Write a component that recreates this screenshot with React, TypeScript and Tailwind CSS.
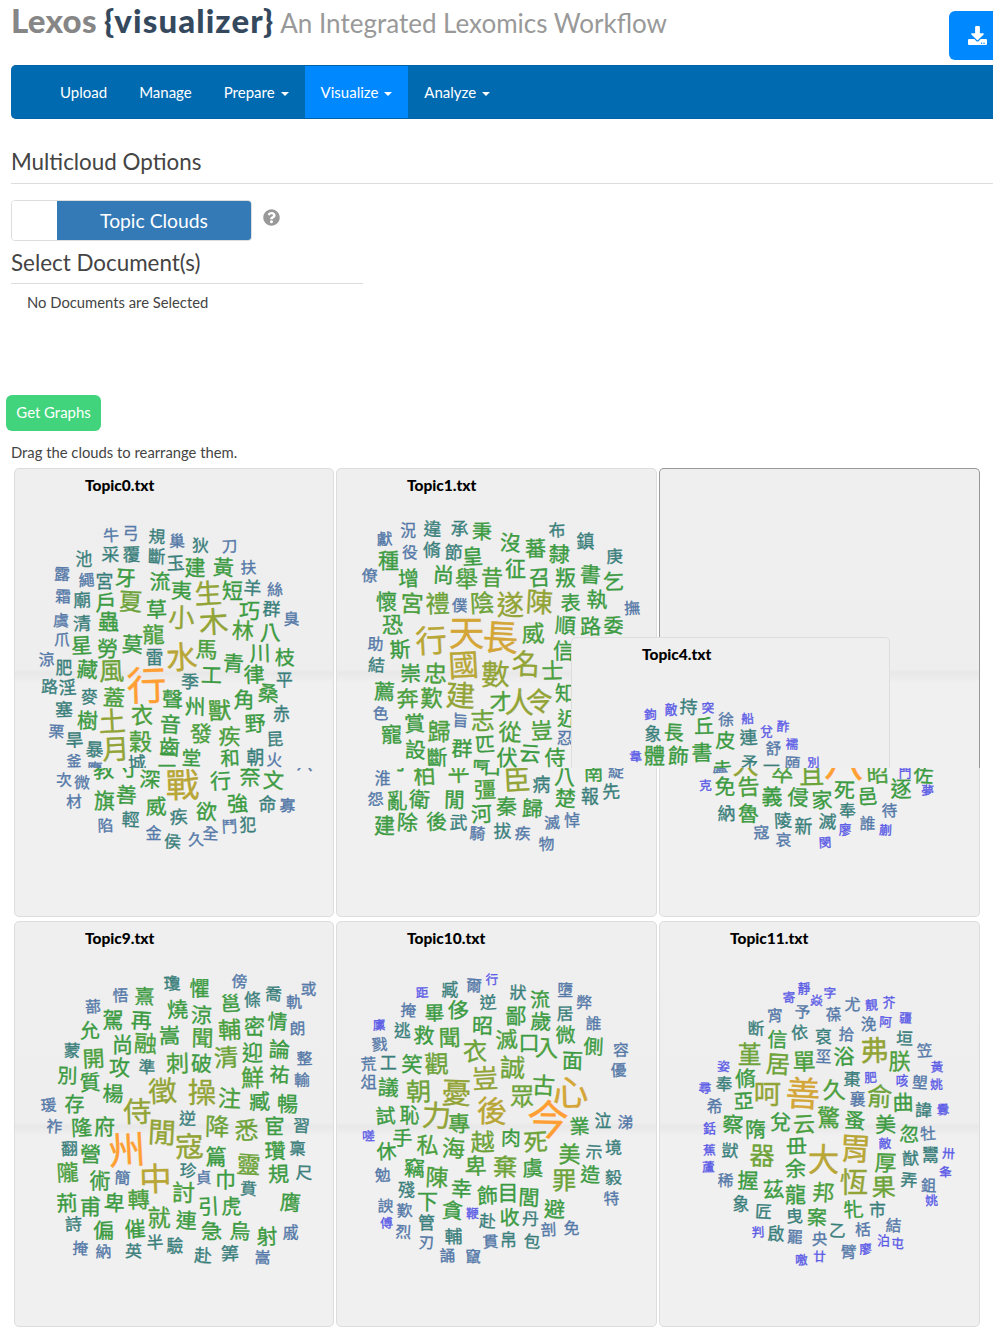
import React from "react";
import { FaDownload, FaQuestionCircle } from "react-icons/fa";

type Word = { text: string; x: number; y: number; size: number; tilt: number };

// Each entry is "glyph x y size"; x and y give the centre of the glyph.
const parse = (source: string): Word[] =>
  source
    .trim()
    .split(/\s*,\s*/)
    .filter(Boolean)
    .map((entry, i) => {
      const [text, x, y, size] = entry.split(" ");
      return { text, x: +x, y: +y, size: +size, tilt: ((i * 7) % 5) * 1.6 - 3.2 };
    });

const topic0Top = parse(`牛 111 535.3 15,弓 130.5 533.5 15,規 157 536.5 16,巢 177 541 15,狄 200.5 545.5 16,刀 229.5 546 15,池 84 559 16,采 110.5 554.5 17,覆 131.5 554.5 17,斷 156.5 556.5 17,玉 175.5 563 17,建 195 567 20,黃 223.5 567.5 20,扶 248.5 567.5 15,露 62 574 15,繩 86.5 580 15,宮 104.5 581 17,牙 125.5 578 20,流 160 581.5 20,夷 181.5 590.5 20,生 208 593.5 26,短 232.5 590 20,羊 252.5 588 17,絲 275 589.5 15,霜 63 596.5 15,廟 82 600 17,戶 106 602.5 20,夏 130.5 601.5 23,草 156.5 609.5 20,小 181.5 617.5 25,木 213.5 622 28,巧 249.5 610.5 20,群 271.5 609 17,臭 291.5 619 15,虞 61 620.5 15,清 82 623.5 17,蟲 108.5 621 20,林 243 630.5 21,八 270 632.5 20,爪 62 639.5 15,星 81.5 645.5 20,勞 107.5 648.5 20,莫 132.5 644.5 20,龍 153.5 634.5 21,馬 206.5 649.5 21,水 181.5 657 30,雷 154.5 657 17,青 233.5 663.5 20,川 260 653 20,枝 285 657.5 19,涼 46.5 659.5 15,肥 64 668 16,藏 87.5 669.5 20,風 111.5 671 24,工 211.5 675 20,律 254 674.5 20,平 284.5 679.5 16,季 190 681.5 17,行 146.5 685.5 38,路 49.5 686.5 16,淫 67.5 687.5 17,麥 89.5 696.5 16,蓋 114 697.5 21,聲 172.5 699.5 20,州 195 706.5 20,獸 219.5 710.5 22,角 244 699.5 20,桑 268.5 693.5 20,塞 64 709.5 17,樹 87.5 720.5 20,土 112 721.5 26,衣 142 715 21,音 170.5 724.5 20,發 201 733.5 21,疾 229.5 736.5 21,野 255 723.5 20,赤 281.5 714 16,栗 56.5 731.5 15,旱 74.5 740 17,暴 94.5 749.5 17,月 115.5 749 26,穀 140.5 741.5 22,齒 169.5 747 20,昆 275 739 16,堂 191.5 758 18.5,和 230 758 18.5,朝 255.5 757.5 17,火 274.5 760 15,釜 74 761 14,鷹 94.5 769 15,城 137 763 17,二 167 760 18`);

const topic0Bottom = parse(`教 103.5 770 20,寸 128.5 767 20,深 150 779.5 20,戰 182.5 785 32,、 208 762 24,行 220.5 781 20,奈 250 776.5 20,文 273.5 780.5 20,次 64 780 15,微 82 782.5 15,材 74 801.5 15,旗 104.5 800.5 20,善 126.5 795 20,威 156 806.5 20,欲 206.5 811.5 20,強 237.5 803.5 20,命 267.5 804 17,寡 287.5 805.5 15,陷 105.5 825.5 15,輕 130.5 819.5 17,疾 178.5 817 17,金 153.5 833.5 15,侯 172.5 841.5 16,久 196 839.5 15,全 210.5 833.5 15,鬥 229.5 826.5 15,犯 248 824.5 16,八 305 764 15`);

const topic1Top = parse(`獻 384.5 539 15,況 408 530.5 15,違 432.5 529 17,承 459.5 528.5 17,秉 482 531.5 19,布 557 530.5 16,鎮 585.5 541.5 17,沒 510.5 543 20,蕃 535.5 548.5 20,隸 559.5 554 20,庚 614.5 556.5 16,種 388.5 560.5 20,役 410 552.5 15,脩 432 550 17,節 453.5 552.5 17,皇 472.5 556.5 20,征 515.5 568.5 20,尚 443.5 575 20,舉 466.5 579 22,昔 492 577.5 21,召 539.5 577.5 20,叛 565.5 577.5 20,書 590.5 574.5 20,乞 613.5 581.5 20,僚 369.5 575.5 15,增 408.5 578.5 20,懷 386.5 601.5 20,宮 412 603.5 22,禮 437.5 603.5 23,僕 459.5 605.5 15,陰 482 603 23,遂 510.5 604.5 26,陳 539.5 602 26,表 570.5 603 19,執 597 599.5 20,撫 632 608 15,恐 392.5 624.5 20,順 565.5 625.5 20,路 590.5 626.5 20,委 613.5 625.5 19,行 431 640.5 30,天 466.5 632.5 34,長 500.5 637.5 34,威 533 633.5 22,助 375.5 644 15,斯 400 649.5 20,信 563.5 650 20,結 376.5 665 16,崇 410.5 673.5 20,忠 435.5 673.5 22,國 463.5 665 29,數 495.5 674.5 27,名 526 664 27,士 552.5 670.5 21,薦 384.5 691.5 20,奔 407.5 698.5 21,歎 431.5 697.5 21,建 460.5 695.5 28,才 500.5 701.5 21,人 519.5 702.5 28,令 539.5 701.5 26,知 565 694 19,近 567.5 718.5 19,志 482.5 720.5 23,色 380.5 713.5 15,賞 414.5 723.5 20,歸 439 731.5 22,旨 460.5 720.5 15,寵 391.5 734.5 20,從 510 732 22,豈 541.5 730.5 21,忍 564.5 738 15,設 415.5 750 20,斷 437 757.5 20,群 462 748.5 20,匹 485 744.5 19,伏 507 757 20,云 530 753.5 20,侍 555 757.5 20,厚 481 768 18`);

const topic1Bottom = parse(`柏 424.5 775.5 21,淮 382.5 778.5 15,可 397 762 20,平 458.5 773 21,石 491 766 20,臣 517 780 26,病 541.5 784 17,八 565 777 20,南 593.5 773 19,綻 616 771.5 15,先 611 791.5 17,報 590 796 17,楚 565.5 798.5 20,彊 485 789.5 21,閒 454.5 799.5 20,怨 375.5 799 15,亂 397 800 20,衛 419.5 799.5 20,秦 506.5 806.5 20,歸 532.5 808.5 20,河 481.5 814 20,建 384.5 825.5 20,除 407.5 822.5 20,後 436.5 821.5 20,武 458.5 822.5 17,滅 552 822.5 15,悼 572 820.5 15,騎 477.5 833.5 15,拔 502.5 831 17,疾 522.5 833.5 15,物 546.5 844 15`);

const topic4Top = parse(`鉤 650.5 714.5 12,敵 671 709 12,持 688.5 707 17,突 708 708 12,徐 726 719.5 15,船 747.5 718.5 12,象 653 733.5 16,長 674 732.5 19,丘 704 726 19,皮 725.5 740.5 19,連 748.5 737.5 17,兌 766.5 731.5 12,酢 783 726.5 12,舒 773.5 748.5 15,襦 792 744 12,韋 635.5 756.5 12,體 654.5 755 20,飾 678.5 756 20,書 702 752.5 20,矛 749.5 762.5 16,走 722.5 769 18,一 771.5 766 16,頤 792.5 763.5 15,別 813.5 762.5 11.5`);

const topic4Bottom = parse(`盧 720 766 15,大 745.5 764 25,卒 782.5 773.5 21,且 811.5 775 24,八 844 762 38,昭 877.5 774 21,門 905 772 12,佐 923.5 775 19,克 705.5 785.5 12,免 725 786.5 20,告 748.5 786.5 21,義 772 796.5 20,侵 798 797.5 20,家 822 800 20,死 844.5 790 20,邑 867.5 796.5 19,逐 901 788.5 20,夢 927.5 790.5 12,納 726.5 813.5 17,魯 748.5 813.5 20,陵 783 820.5 17,新 803.5 826 17,滅 827.5 821.5 17,奉 847.5 810.5 16,誰 867.5 823.5 15,待 889.5 810.5 15,廖 845 829 12,蒯 885.5 830 12,寇 761.5 832.5 15,哀 783.5 840 15,閔 825 842.5 12`);

const topic9 = parse(`瓊 172 983.5 16,懼 199.5 989 19,傍 239.5 981.5 15,悟 120.5 995.5 15,熹 144.5 996.5 19,邕 230.5 1003.5 19,條 252.5 999.5 16,喬 273.5 994 16,軌 294 1002 15,或 308.5 989 15,蔀 93 1006.5 15,駕 113 1019 20,再 141.5 1020.5 20,燒 177.5 1009.5 20,涼 201.5 1015 20,允 89.5 1030.5 19,尚 122.5 1044 20,融 145.5 1043.5 22,嵩 169.5 1035.5 20,聞 202.5 1038 21,輔 229.5 1030 22,密 254.5 1026.5 20,情 277.5 1021.5 19,朗 297.5 1028.5 15,蒙 72 1050.5 16,開 93.5 1058.5 21,攻 119.5 1067.5 20,準 147 1067 16,刺 177.5 1063.5 22,破 201.5 1063.5 20,清 226 1057.5 23,迎 252.5 1052 20,論 279.5 1049.5 20,整 304.5 1058.5 15,別 67.5 1075.5 19,質 90 1082.5 20,鮮 252.5 1077.5 22,祐 279.5 1074.5 19,輸 302 1080 15,楊 113 1093.5 20,徵 162.5 1091 27,操 202 1093 27,注 229.5 1098.5 22,臧 259.5 1101.5 20,暢 287.5 1104 20,瑗 48.5 1105 15,存 74.5 1104.5 19,祚 54.5 1126.5 15,侍 137.5 1111.5 27,逆 187.5 1118.5 16,隆 81.5 1127.5 20,府 104.5 1126.5 20,閒 162 1132.5 27,寇 189.5 1146.5 27,降 217 1126.5 23,悉 246.5 1130.5 23,宦 274.5 1126.5 19,習 301.5 1125.5 16,翻 69.5 1148.5 16,營 90.5 1154 20,州 126.5 1150 36,篇 216 1156 20,靈 248.5 1164.5 23,瓚 275 1151 20,稟 297.5 1148.5 16,隴 67.5 1172.5 21,術 100 1180 20,簡 122.5 1178 15,中 155.5 1179 31,珍 188 1170.5 16,貞 203.5 1177.5 15,巾 225.5 1179.5 20,賁 248.5 1188.5 16,規 278.5 1174 20,尺 304 1172.5 16,荊 67 1203 20,甫 90.5 1206.5 20,卑 114.5 1203 20,轉 138.5 1199.5 21,討 183.5 1192.5 22,引 208.5 1206.5 20,虎 231.5 1206.5 19,膺 290.5 1202.5 20,詩 73.5 1224 16,偏 103.5 1230.5 20,催 135 1229 20,就 159 1217.5 22,連 186.5 1220.5 20,急 211.5 1231 20,烏 240 1231 20,射 267 1236.5 20,戚 290.5 1232.5 15,掩 80.5 1248.5 15,納 103.5 1251.5 15,英 133.5 1251 16,半 155 1242.5 16,驗 175 1245.5 16,赴 203 1255.5 17,筭 230 1253.5 17,嵩 262.5 1257.5 15`);

const topic10 = parse(`距 422 992.5 12,臧 450 990 16,爾 474 985.5 15,行 492 979.5 12,狀 518 992.5 16,流 540 999.5 19,墮 565 990.5 15,掩 408.5 1010.5 15,畢 434.5 1013 19,侈 458.5 1010 20,逆 488 1002.5 16,鄙 516 1015.5 20,歲 541 1021.5 20,居 565 1013.5 16,弊 584 1002.5 15,廩 379 1025 12,逃 402.5 1031 16,救 424 1035.5 20,聞 449.5 1037.5 21,昭 482.5 1025.5 20,滅 506.5 1039.5 21,口 529 1042.5 20,入 547 1048 22,微 565.5 1035 19,誰 593.5 1023.5 15,戮 379.5 1044.5 15,衣 475 1051.5 23,側 593.5 1046.5 19,容 621 1050 15,面 572.5 1060.5 20,荒 368.5 1064 15,工 388.5 1062.5 16,笑 412 1064.5 20,觀 436.5 1064 23,誠 512.5 1067.5 24,優 618.5 1070 15,俎 368.5 1082 15,議 388.5 1087.5 20,朝 418.5 1091.5 24,憂 456.5 1093 28,豈 485 1078.5 25,眾 522 1096 23,古 543.5 1085.5 22,心 570.5 1092.5 34,今 548 1120 40,試 385.5 1116 19,恥 409.5 1115.5 19,力 436.5 1115.5 28,專 459 1123.5 21,後 492 1111 29,業 579.5 1126.5 19,泣 603 1121 16,涕 625.5 1122.5 15,嗟 368.5 1136 12,手 402.5 1138 19,休 386.5 1151.5 19,私 427.5 1144.5 21,海 453.5 1148.5 22,越 482.5 1142 23,肉 511 1138 19,死 535.5 1142 23,美 569.5 1154 21,示 594 1152 16,境 613.5 1147.5 16,竊 414.5 1168 20,勉 382.5 1175 15,殘 406.5 1190 16,陳 437 1177.5 22,卑 475.5 1166 21,棄 505 1167 23,虞 532.5 1168 20,罪 564 1180.5 23,造 590.5 1174.5 19,毅 613.5 1177.5 16,幸 461.5 1188.5 20,飾 487.5 1195.5 20,目 508 1192.5 20,閭 529 1197.5 20,特 611.5 1198.5 15,諛 385.5 1206 15,歎 404.5 1210.5 15,下 427.5 1201.5 20,貪 452.5 1210.5 20,鞭 472.5 1213.5 12,避 554.5 1209 20,傅 386.5 1223 12,管 426.5 1223 16,赴 487.5 1221 16,收 509.5 1217.5 19,丹 530.5 1218.5 16,剖 548.5 1229.5 15,免 571.5 1228.5 15,烈 403.5 1232 15,輔 453.5 1236.5 17,刃 426.5 1242.5 15,貫 490.5 1241.5 15,帛 508.5 1240 16,包 532 1241.5 16,誦 447.5 1255.5 15,竄 473 1256.5 15`);

const topic11 = parse(`寄 789 997.5 12,靜 804 988.5 12,焱 816.5 1000.5 12,字 830 993 12,尤 852.5 1004.5 15,靚 871.5 1005 12,芥 889 1002 12,疆 905.5 1018 12,宵 775 1015.5 15,予 802.5 1012 15,葆 833.5 1014.5 15,浼 868.5 1024.5 15,阿 885.5 1022 12,断 756 1028.5 16,信 777.5 1039.5 19,依 799.5 1032.5 16,裒 823.5 1036.5 16,拾 846.5 1034.5 15,弗 874.5 1050.5 27,垣 904.5 1038.5 16,笠 924.5 1050.5 15,堇 749.5 1054.5 23,居 778 1064 23,單 804 1061.5 22,坙 823.5 1056.5 15,浴 844 1056.5 20,朕 899.5 1060.5 21,姿 723.5 1066.5 12,黃 937 1067 12,奉 724 1084 16,脩 745.5 1078.5 20,呵 767.5 1093.5 26,善 803 1093.5 33,久 834 1090 22,棗 852 1079 16,肥 870.5 1077.5 12,咳 902 1080.5 12,塱 920 1082.5 15,姚 936.5 1084.5 12,尋 705 1088 12,亞 743.5 1101 19,襄 857.5 1099 15,俞 879.5 1096.5 24,曲 903 1102.5 20,諱 923.5 1110 16,釁 943 1109.5 12,希 714.5 1106.5 15,察 733 1124.5 20,隋 755.5 1129.5 20,兌 780.5 1122 20,云 804 1124 21,驚 828.5 1118 22,蚤 855 1120.5 20,美 885.5 1124.5 20,忽 909.5 1134 19,牡 928 1133.5 15,銛 709.5 1128.5 12,獃 730 1150.5 16,蕉 709.5 1150 12,器 762 1155.5 24,毌 796.5 1146.5 20,大 823.5 1159.5 30,胃 855.5 1148.5 30,敵 885 1143.5 12,厚 885.5 1163 21,猷 910.5 1158.5 16,鬻 930.5 1155 16,卅 948.5 1153.5 12,蘆 708.5 1167 12,稀 725.5 1180.5 15,余 795.5 1168.5 20,恆 854 1183 27,弄 909 1180 16,夆 945.5 1172 12,握 748 1180.5 20,茲 773.5 1189.5 20,龍 795.5 1194 20,邦 823.5 1192.5 21,果 883.5 1187 23,鉏 928.5 1185.5 15,姚 931.5 1200.5 12,象 741 1203.5 16,匠 763.5 1211.5 16,曳 794.5 1216 16,案 817 1217.5 19,牝 853.5 1209.5 19,市 877.5 1210 16,乙 837.5 1230.5 16,栝 863 1229.5 15,結 893.5 1225.5 15,判 758 1232 12,啟 776 1233.5 16,罷 795 1237 15,央 819.5 1239 15,臂 848.5 1252 15,廖 865.5 1249 12,泊 883.5 1240.5 12,屯 897.5 1243.5 12,噭 801.5 1260 12,廿 819.5 1256.5 12`);

const fillFor = (size: number) => {
  if (size <= 12) return "#5b5be6";
  if (size <= 15) return "#5579a8";
  if (size <= 17) return "#3b7f7c";
  if (size <= 20) return "#3c9b42";
  if (size <= 22) return "#4c9f3e";
  if (size <= 24) return "#6da339";
  if (size <= 28) return "#93a437";
  if (size <= 32) return "#b8a636";
  if (size <= 35) return "#d3a637";
  return "#ff9f33";
};

type CloudProps = { words: Word[]; x: number; y: number; w: number; h: number };

function Cloud({ words, x, y, w, h }: CloudProps) {
  return (
    <svg
      className="block overflow-hidden"
      width={w}
      height={h}
      viewBox={`${x} ${y} ${w} ${h}`}
      fontFamily='"Noto Sans CJK TC", "Noto Sans CJK SC", sans-serif'
      textAnchor="middle"
    >
      {words.map((word, i) => (
        <text
          key={i}
          x={word.x}
          y={word.y + word.size * 0.385}
          fontSize={word.size * 1.05}
          fill={fillFor(word.size)}
          stroke={fillFor(word.size)}
          strokeWidth={0.35}
          transform={`rotate(${word.tilt} ${word.x} ${word.y})`}
        >
          {word.text}
        </text>
      ))}
    </svg>
  );
}

function Title({ children }: { children: React.ReactNode }) {
  return (
    <h3 className="h-[44px] pl-[70px] pt-[6px] text-[15.5px] font-black leading-[20px] text-black">
      {children}
    </h3>
  );
}

function NavItem({ label, menu, active }: { label: string; menu?: boolean; active?: boolean }) {
  return (
    <a
      className={`flex h-full items-center gap-[6px] px-[16px] ${active ? "bg-[#0088ff]" : ""}`}
    >
      <span>{label}</span>
      {menu && (
        <span className="mt-[3px] border-x-[4.5px] border-t-[4.5px] border-x-transparent border-t-white" />
      )}
    </a>
  );
}

const lowerCards = [
  { name: "Topic9.txt", words: topic9, x: 15, width: "w-[320px]" },
  { name: "Topic10.txt", words: topic10, x: 337, width: "w-[321px]" },
  { name: "Topic11.txt", words: topic11, x: 660, width: "w-[321px]" },
];

export default function App() {
  return (
    <div className="h-[1330px] w-[993px] overflow-hidden bg-white font-['Lato',sans-serif] text-[#444]">
      <header className="flex h-[65px] items-start justify-between pl-[11px]">
        <h1 className="flex items-baseline whitespace-nowrap leading-[40px]">
          <span className="text-[33px] font-black tracking-[0.3px] text-[#868686]">Lexos</span>
          <span className="ml-[7px] text-[33px] font-black tracking-[1.1px] text-[#34495e]">
            {"{visualizer}"}
          </span>
          <span className="ml-[6px] text-[26px] text-[#999]">An Integrated Lexomics Workflow</span>
        </h1>
        <button className="mt-[11px] flex h-[49px] w-[44px] items-center rounded-l-[6px] bg-[#0088ff] pl-[19px] text-white">
          <FaDownload size={19} className="shrink-0" />
        </button>
      </header>

      <nav className="ml-[11px] flex h-[54px] items-stretch rounded-l-[5px] border-y border-[#0060a4] bg-[#006ab1] pl-[33px] text-[15px] text-white">
        <NavItem label="Upload" />
        <NavItem label="Manage" />
        <NavItem label="Prepare" menu />
        <NavItem label="Visualize" menu active />
        <NavItem label="Analyze" menu />
      </nav>

      <section className="ml-[11px] flex h-[276px] flex-col pt-[28px]">
        <h2 className="h-[37px] border-b border-[#ddd] text-[22.4px] leading-[30px]">
          Multicloud Options
        </h2>
        <div className="mt-[16px] flex items-start">
          <div className="flex h-[41px] w-[241px] overflow-hidden rounded-[4px] border border-[#ddd]">
            <div className="w-[45px] bg-white" />
            <div className="flex flex-1 items-center justify-center bg-[#337ab7] pt-[2px] text-[19.3px] text-white">
              Topic Clouds
            </div>
          </div>
          <FaQuestionCircle size={17} className="ml-[11px] mt-[9px] text-[#999]" />
        </div>
        <h2 className="mt-[6px] h-[37px] w-[352px] border-b border-[#ddd] text-[22.4px] leading-[31px]">
          Select Document(s)
        </h2>
        <p className="ml-[16px] mt-[7px] text-[14.8px] leading-[22px]">No Documents are Selected</p>
      </section>

      <button className="ml-[6px] block h-[36px] w-[95px] rounded-[6px] bg-[#42d47c] pb-[2px] text-[14.9px] text-white">
        Get Graphs
      </button>
      <p className="ml-[11px] h-[37px] pt-[10px] text-[14.8px] leading-[22px]">
        Drag the clouds to rearrange them.
      </p>

      <main className="relative ml-[14px]">
        <div className="flex gap-[2px]">
          <div className="h-[449px] w-[320px] rounded-[5px] border border-[#ddd] bg-[#f0f0f0] bg-[linear-gradient(#efefef_0,#eeeeee_200px,#e8e8e8_204px,#f0f0f0_214px)]">
            <Title>Topic0.txt</Title>
            <Cloud words={topic0Top} x={15} y={513} w={318} h={255} />
            <Cloud words={topic0Bottom} x={15} y={768} w={318} h={120} />
          </div>
          <div className="h-[449px] w-[321px] rounded-[5px] border border-[#ddd] bg-[#f0f0f0] bg-[linear-gradient(#efefef_0,#eeeeee_200px,#e8e8e8_204px,#f0f0f0_214px)]">
            <Title>Topic1.txt</Title>
            <Cloud words={topic1Top} x={337} y={513} w={319} h={255} />
            <Cloud words={topic1Bottom} x={337} y={768} w={319} h={120} />
          </div>
          <div className="w-[321px]">
            <div className="h-[300px] rounded-t-[5px] border border-b-0 border-[#999] bg-[linear-gradient(#efefef_0,#eeeeee_200px,#e8e8e8_204px,#f0f0f0_214px)]" />
            <div className="h-[149px] rounded-b-[5px] border border-t-0 border-[#ddd] bg-[#f0f0f0]">
              <Cloud words={topic4Bottom} x={660} y={768} w={319} h={120} />
            </div>
          </div>
        </div>

        <div className="mt-[4px] flex gap-[2px]">
          {lowerCards.map((card) => (
            <div
              key={card.name}
              className={`h-[406px] rounded-[5px] border border-[#ddd] bg-[#f0f0f0] bg-[linear-gradient(#efefef_0,#eeeeee_200px,#e8e8e8_204px,#f0f0f0_214px)] ${card.width}`}
            >
              <Title>{card.name}</Title>
              <Cloud words={card.words} x={card.x} y={966} w={318} h={320} />
            </div>
          ))}
        </div>

        {/* Cloud being dragged over its neighbours */}
        <div className="absolute left-[557px] top-[169px] h-[131px] w-[319px] overflow-hidden rounded-t-[5px] border border-b-0 border-[#ddd] bg-[#efefef]">
          <Title>Topic4.txt</Title>
          <Cloud words={topic4Top} x={572} y={682} w={317} h={86} />
        </div>
      </main>
    </div>
  );
}
